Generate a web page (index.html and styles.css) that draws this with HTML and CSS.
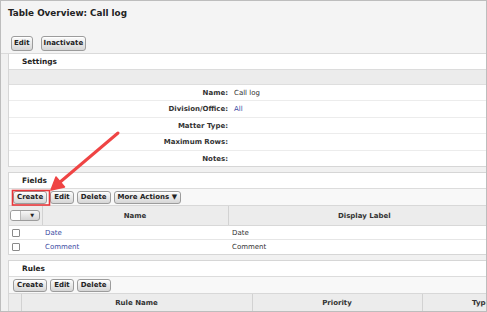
FILE: index.html
```html
<!DOCTYPE html>
<html>
<head>
<meta charset="utf-8">
<link rel="stylesheet" href="styles.css">
</head>
<body>
<div class="frame">
  <div class="top">
    <h1 class="title">Table Overview: Call log</h1>
    <div class="top-btns">
      <button class="btn btn-lg">Edit</button>
      <button class="btn btn-lg">Inactivate</button>
    </div>
  </div>
  <div class="main">
    <section class="sec sec-settings">
      <div class="sec-head">Settings</div>
      <div class="band"></div>
      <div class="kv"><div class="k">Name:</div><div class="v">Call log</div></div>
      <div class="kv"><div class="k">Division/Office:</div><div class="v link">All</div></div>
      <div class="kv"><div class="k">Matter Type:</div><div class="v"></div></div>
      <div class="kv"><div class="k">Maximum Rows:</div><div class="v"></div></div>
      <div class="kv"><div class="k">Notes:</div><div class="v"></div></div>
    </section>

    <section class="sec">
      <div class="sec-head">Fields</div>
      <div class="toolbar">
        <button class="btn">Create</button>
        <button class="btn">Edit</button>
        <button class="btn">Delete</button>
        <button class="btn">More Actions ▼</button>
      </div>
      <table class="grid grid-fields">
        <colgroup><col class="c-chk"><col class="c-name"><col class="c-label"></colgroup>
        <thead>
          <tr>
            <th class="th-chk"><span class="chkdrop"><span class="chkbox"></span><span class="caret">▼</span></span></th>
            <th>Name</th>
            <th>Display Label</th>
          </tr>
        </thead>
        <tbody>
          <tr><td class="td-chk"><span class="cb"></span></td><td class="link">Date</td><td>Date</td></tr>
          <tr><td class="td-chk"><span class="cb"></span></td><td class="link">Comment</td><td>Comment</td></tr>
        </tbody>
      </table>
    </section>

    <section class="sec">
      <div class="sec-head">Rules</div>
      <div class="toolbar">
        <button class="btn">Create</button>
        <button class="btn">Edit</button>
        <button class="btn">Delete</button>
      </div>
      <table class="grid grid-rules">
        <colgroup><col class="r-chk"><col class="r-name"><col class="r-prio"><col class="r-type"></colgroup>
        <thead>
          <tr><th></th><th>Rule Name</th><th>Priority</th><th>Type</th></tr>
        </thead>
      </table>
    </section>
  </div>

  <svg class="arrow" width="487" height="312" viewBox="0 0 487 312">
    <rect x="12.5" y="190.5" width="37" height="14.5" fill="none" stroke="#e8363a" stroke-width="1.6"/>
    <line x1="118" y1="133" x2="59" y2="183" stroke="#ef4444" stroke-width="3" stroke-linecap="round"/>
    <polygon points="51,190 56,177 64.5,187" fill="#ef4444" stroke="#ef4444" stroke-width="1.5" stroke-linejoin="round"/>
  </svg>
</div>
</body>
</html>
```
FILE: styles.css
```css
* { box-sizing: border-box; }
html, body { margin: 0; padding: 0; background: #fff; }
body { font-family: "DejaVu Sans", Verdana, sans-serif; color: #222; }

.frame {
  position: relative;
  width: 487px;
  height: 312px;
  border: 1px solid #bdbdbd;
  background: #f1f1f1;
  overflow: hidden;
}

.top {
  background: #f4f4f4;
  border-bottom: 1px solid #dadada;
  padding: 6px 0 2px 7px;
}
.title {
  margin: 0;
  font-size: 8.8px;
  line-height: 12px;
  font-weight: bold;
  color: #222;
}
.top-btns {
  margin-top: 17px;
  display: flex;
  gap: 8px;
  padding-left: 3px;
}

.btn {
  font-family: "DejaVu Sans", Verdana, sans-serif;
  font-size: 7px;
  font-weight: bold;
  color: #222;
  height: 13px;
  line-height: 11px;
  padding: 0 3px;
  margin: 0;
  border: 1px solid #9c9c9c;
  border-radius: 3px;
  background: linear-gradient(#fbfbfb, #d6d6d6);
  box-shadow: inset 0 1px 0 #fff;
  white-space: nowrap;
}
.btn-lg { height: 15px; line-height: 13px; padding: 0 2px; }

.main {
  padding-left: 7px;
  background: #f1f1f1;
}
.sec {
  background: #fff;
  border-left: 1px solid #d6d6d6;
  border-top: 1px solid #d6d6d6;
  border-bottom: 1px solid #d6d6d6;
  margin-top: 5px;
  overflow: hidden;
}
.sec-settings { margin-top: 0; border-top: none; border-bottom: none; }

.sec-head {
  height: 16px;
  line-height: 16px;
  border-bottom: 1px solid #dcdcdc;
  padding-left: 13px;
  font-size: 7.4px;
  font-weight: bold;
  color: #222;
}
.band {
  height: 15px;
  background: #ececec;
  border-bottom: 1px solid #dedede;
}

.kv {
  display: grid;
  grid-template-columns: 219px 1fr;
  height: 16.4px;
  border-bottom: 1px solid #ececec;
  font-size: 7px;
  line-height: 16px;
}
.kv:last-child { border-bottom-color: #d6d6d6; }
.k { text-align: right; font-weight: bold; color: #333; }
.v { padding-left: 6px; color: #333; }
.link { color: #3c4ba3; }

.toolbar {
  height: 17px;
  padding: 2px 0 0 4px;
  display: flex;
  gap: 3px;
  background: #f8f8f8;
  border-bottom: 1px solid #d8d8d8;
}

.grid {
  border-collapse: collapse;
  table-layout: fixed;
  font-size: 7px;
}
.grid-fields { width: 491px; }
.c-chk { width: 33px; }
.c-name { width: 186px; }
.c-label { width: 272px; }
.grid-rules { width: 531px; }
.r-chk { width: 12px; }
.r-name { width: 231px; }
.r-prio { width: 170px; }
.r-type { width: 118px; }

.grid th {
  background: #ececec;
  height: 20px;
  padding: 0;
  font-weight: bold;
  color: #333;
  text-align: center;
  border-left: 1px solid #d2d2d2;
  border-bottom: 1px solid #d8d8d8;
}
.grid th:first-child { border-left: none; }
.grid-rules th { height: 18px; border-bottom: none; }
.grid td {
  height: 14px;
  padding: 0 0 0 3px;
  border-bottom: 1px solid #e6e6e6;
  color: #333;
  white-space: nowrap;
}
.grid td.link { color: #3c4ba3; }
.grid td:nth-child(3) { padding-left: 4px; }
.grid tr:last-child td { border-bottom: none; }

.th-chk { text-align: left !important; }
.chkdrop {
  display: flex;
  align-items: center;
  width: 30px;
  height: 11px;
  margin-left: 1px;
  border: 1px solid #9c9c9c;
  border-radius: 3px;
  background: linear-gradient(#f7f7f7, #d4d4d4);
}
.chkbox {
  width: 10px;
  height: 9px;
  background: #fff;
  border-right: 1px solid #bbb;
  border-radius: 2px 0 0 2px;
}
.caret {
  flex: 1;
  text-align: right;
  padding-right: 5px;
  font-size: 5px;
  line-height: 9px;
  color: #222;
}
.td-chk { padding-left: 3px !important; }
.cb {
  display: block;
  width: 8px;
  height: 8px;
  border: 1px solid #8a8a8a;
  background: #fff;
  border-radius: 1px;
}

.arrow {
  position: absolute;
  left: -1px;
  top: -1px;
  pointer-events: none;
}
```
